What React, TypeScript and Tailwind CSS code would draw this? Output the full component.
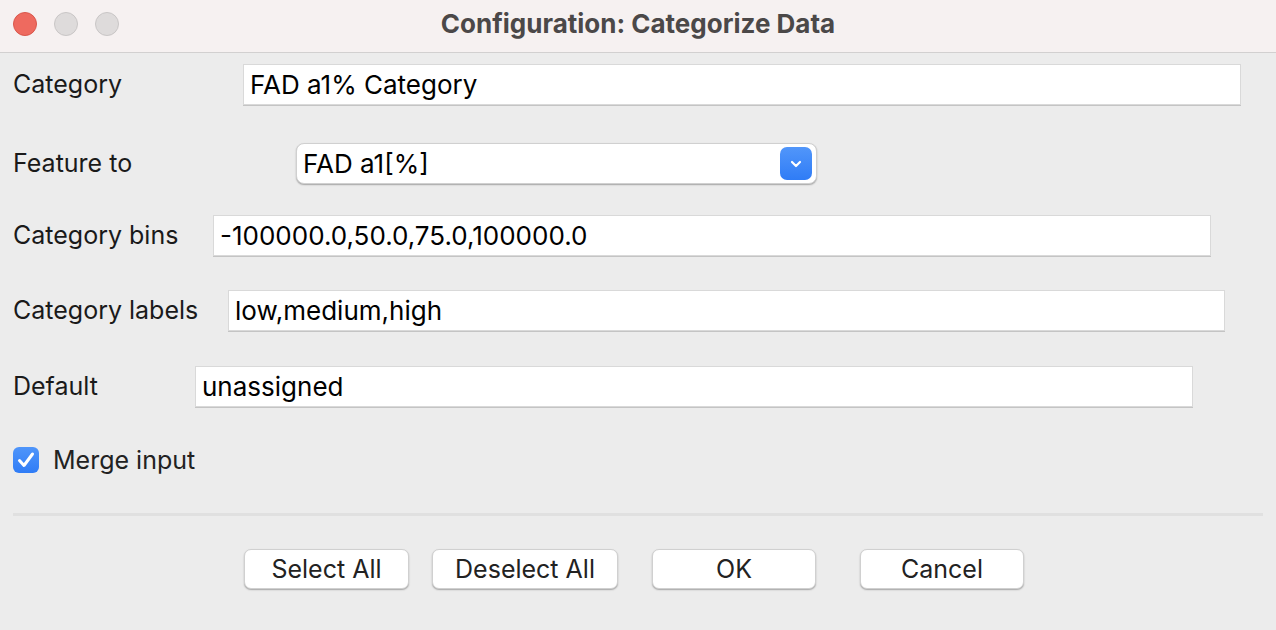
import React from "react";

const font = { fontFamily: "Inter, 'Liberation Sans', sans-serif" };

const TextField: React.FC<{ value: string; width: string }> = ({ value, width }) => (
    <div
        className={`${width} h-[41px] bg-white border border-[#d9d9d9] shadow-[0_1px_0_#c4c4c4] flex items-center pl-[6px] text-[26px] leading-none text-black`}
    >
        {value}
    </div>
);

const Button: React.FC<{ label: string; width: string }> = ({ label, width }) => (
    <button
        className={`${width} h-[40px] bg-white rounded-[7px] border-[0.5px] border-[#d0d0d0] shadow-[0_1px_1.5px_rgba(0,0,0,0.3)] text-[25px] leading-none text-[#222] flex items-center justify-center`}
    >
        {label}
    </button>
);

export default function App() {
    return (
        <div className="w-[1276px] h-[630px] bg-[#ececec] overflow-hidden flex flex-col" style={font}>
            {/* title bar */}
            <div className="h-[53px] shrink-0 bg-[#f6f1f1] border-b border-[#d2d0d0] flex items-center relative">
                <div className="flex items-center gap-[17px] pl-[13px] -mt-[5px]">
                    <span className="w-[24px] h-[24px] rounded-full bg-[#ee6a5f] border border-[#d9574c]" />
                    <span className="w-[24px] h-[24px] rounded-full bg-[#dedbdb] border border-[#c9c6c6]" />
                    <span className="w-[24px] h-[24px] rounded-full bg-[#dedbdb] border border-[#c9c6c6]" />
                </div>
                <div className="absolute inset-x-0 top-0 h-[46px] flex items-center justify-center text-[26px] font-bold text-[#4b4848] pointer-events-none">
                    Configuration: Categorize Data
                </div>
            </div>

            {/* form */}
            <div className="pl-[13px] text-[25px] leading-none text-[#1a1a1a]">
                <div className="flex items-center mt-[11px]">
                    <div className="w-[230px]">Category</div>
                    <TextField value="FAD a1% Category" width="w-[998px]" />
                </div>

                <div className="flex items-center mt-[38px]">
                    <div className="w-[283px]">Feature to</div>
                    <div className="w-[521px] h-[41px] bg-white rounded-[8px] border-[0.5px] border-[#d0d0d0] shadow-[0_1px_1.5px_rgba(0,0,0,0.3)] flex items-center justify-between pl-[6px] pr-[4px]">
                        <span className="text-black text-[26px]">FAD a1[%]</span>
                        <span className="w-[32px] h-[33px] rounded-[7px] bg-gradient-to-b from-[#5196fa] to-[#2f7cf6] flex items-center justify-center">
                            <svg width="14" height="10" viewBox="0 0 14 10" fill="none">
                                <path d="M3 3l4 4 4-4" stroke="white" strokeWidth="2.2" strokeLinecap="round" strokeLinejoin="round" />
                            </svg>
                        </span>
                    </div>
                </div>

                <div className="flex items-center mt-[31px]">
                    <div className="w-[200px]">Category bins</div>
                    <TextField value="-100000.0,50.0,75.0,100000.0" width="w-[998px]" />
                </div>

                <div className="flex items-center mt-[34px]">
                    <div className="w-[215px]">Category labels</div>
                    <TextField value="low,medium,high" width="w-[997px]" />
                </div>

                <div className="flex items-center mt-[35px]">
                    <div className="w-[182px]">Default</div>
                    <TextField value="unassigned" width="w-[998px]" />
                </div>

                <div className="flex items-center h-[26px] mt-[40px]">
                    <span className="w-[26px] h-[26px] rounded-[6px] bg-gradient-to-b from-[#4f95fa] to-[#2f7cf6] flex items-center justify-center">
                        <svg width="22" height="20" viewBox="0 0 22 20" fill="none">
                            <path d="M4.5 10.5l4.5 5 8.5-11.5" stroke="white" strokeWidth="3" strokeLinecap="round" strokeLinejoin="round" />
                        </svg>
                    </span>
                    <span className="ml-[14px] text-[#222]">Merge input</span>
                </div>
            </div>

            {/* separator */}
            <div className="mx-[13px] mt-[40px] h-[3px] bg-[#e0e0e0]" />

            {/* buttons */}
            <div className="flex items-center mt-[33px] pl-[244px]">
                <Button label="Select All" width="w-[165px]" />
                <div className="w-[23px]" />
                <Button label="Deselect All" width="w-[186px]" />
                <div className="w-[34px]" />
                <Button label="OK" width="w-[164px]" />
                <div className="w-[44px]" />
                <Button label="Cancel" width="w-[164px]" />
            </div>
        </div>
    );
}
